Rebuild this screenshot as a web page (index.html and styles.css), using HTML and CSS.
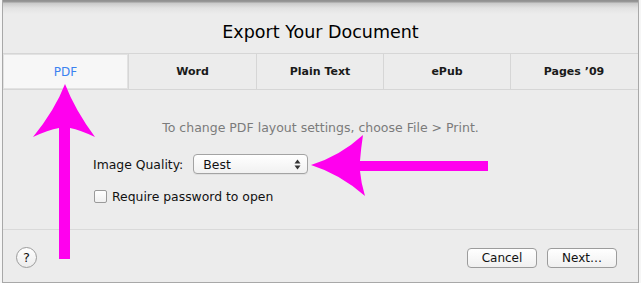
FILE: index.html
```html
<!DOCTYPE html>
<html lang="en">
<head>
    <meta charset="UTF-8">
    <title>Export Your Document</title>
    <link rel="stylesheet" href="styles.css">
</head>
<body>
    <div class="sheet">
        <!-- Title -->
        <div class="title">Export Your Document</div>

        <!-- Format tabs -->
        <div class="tabs">
            <div class="tab selected">PDF</div>
            <div class="tab">Word</div>
            <div class="tab">Plain Text</div>
            <div class="tab">ePub</div>
            <div class="tab">Pages ’09</div>
        </div>

        <!-- Options -->
        <div class="options">
            <p class="note">To change PDF layout settings, choose File &gt; Print.</p>
            <div class="row quality-row">
                <span class="label">Image Quality:</span>
                <div class="popup">
                    <span>Best</span>
                    <svg class="updown" width="7" height="11" viewBox="0 0 7 11">
                        <path d="M0.5 4.5 L3.5 0.5 L6.5 4.5 Z M0.5 6.5 L3.5 10.5 L6.5 6.5 Z" fill="#333"/>
                    </svg>
                </div>
            </div>
            <label class="row check-row">
                <span class="checkbox"></span>
                <span>Require password to open</span>
            </label>
        </div>

        <!-- Footer -->
        <div class="footer">
            <div class="help">?</div>
            <div class="buttons">
                <button class="btn">Cancel</button>
                <button class="btn">Next…</button>
            </div>
        </div>

        <!-- Annotation arrows drawn over the dialog -->
        <svg class="arrows" width="641" height="283" viewBox="0 0 641 283">
            <path d="M59 259 L59 128 Q48 130 33 137 Q55 110 65 84 Q75 110 95 137 Q80 130 70 128 L70 259 Z" fill="#ff00ee"/>
            <path d="M488 161 L360 161 Q361 148 363 135 Q340 156 311 165 Q340 174 365 196 Q361 183 360 171 L488 171 Z" fill="#ff00ee"/>
        </svg>
    </div>
</body>
</html>
```

FILE: styles.css
```css
body {
    margin: 0;
    background: #f6f6f6;
    font-family: 'DejaVu Sans', 'Liberation Sans', sans-serif;
    font-size: 12px;
    color: #111;
}

.sheet {
    position: relative;
    box-sizing: border-box;
    width: 637px;
    height: 283px;
    margin-left: 2px;
    border-left: 1px solid #a8a8a8;
    border-right: 1px solid #a8a8a8;
    border-bottom: 1px solid #a8a8a8;
    background: linear-gradient(#8e8e8e 0, #9a9a9a 2px, #c9c9c9 3px, #e2e2e2 8px, #ececec 14px);
    display: flex;
    flex-direction: column;
}

.title {
    height: 53px;
    box-sizing: border-box;
    padding-top: 22px;
    text-align: center;
    font-size: 17.5px;
    color: #000;
}

.tabs {
    display: grid;
    grid-template-columns: 125px 128px 127px 127px 127px;
    height: 37px;
    box-sizing: border-box;
    border-top: 1px solid #d6d6d6;
    border-bottom: 1px solid #d6d6d6;
}

.tab {
    display: flex;
    align-items: center;
    justify-content: center;
    border-left: 1px solid #d6d6d6;
    font-weight: bold;
    font-size: 11px;
    color: #1a1a1a;
}

.tab:first-child {
    border-left: none;
}

.tab.selected {
    background: #f7f7f7;
    color: #3b82f0;
    font-weight: normal;
    font-size: 12px;
    box-shadow: inset 0 0 0 1px #e2e2e2;
}

.options {
    flex: 1;
    padding-left: 90px;
    border-bottom: 1px solid #d9d9d9;
    font-size: 12.4px;
}

.note {
    margin: 30px 0 0;
    padding-right: 90px;
    text-align: center;
    color: #7b7b7b;
    font-size: 12.5px;
}

.row {
    display: flex;
    align-items: center;
}

.quality-row {
    margin-top: 19px;
}

.label {
    margin-right: 10px;
}

.popup {
    box-sizing: border-box;
    width: 115px;
    height: 20px;
    display: flex;
    align-items: center;
    justify-content: space-between;
    padding: 0 6px 0 9px;
    border: 1px solid #a3a3a3;
    border-radius: 4px;
    background: linear-gradient(#ffffff, #f1f1f1);
    box-shadow: 0 1px 0 rgba(0, 0, 0, 0.05);
}

.check-row {
    margin-top: 15px;
}

.checkbox {
    box-sizing: border-box;
    width: 13px;
    height: 13px;
    margin: 0 5px 0 1px;
    border: 1px solid #9a9a9a;
    border-radius: 2px;
    background: linear-gradient(#ffffff, #f0f0f0);
}

.footer {
    height: 52px;
    display: flex;
    align-items: center;
    justify-content: space-between;
    padding: 0 21px 0 13px;
    box-sizing: border-box;
}

.help {
    box-sizing: border-box;
    width: 21px;
    height: 21px;
    border: 1px solid #9c9c9c;
    border-radius: 50%;
    background: linear-gradient(#ffffff, #ececec);
    display: flex;
    align-items: center;
    justify-content: center;
    font-size: 13px;
    margin-top: 3px;
}

.buttons {
    display: flex;
    gap: 10px;
    margin-top: 3px;
}

.btn {
    box-sizing: border-box;
    width: 70px;
    height: 20px;
    padding: 0;
    font-family: inherit;
    font-size: 12px;
    color: #111;
    border: 1px solid #9c9c9c;
    border-radius: 4px;
    background: linear-gradient(#ffffff, #f0f0f0);
}

.arrows {
    position: absolute;
    top: 0;
    left: -3px;
    pointer-events: none;
}
```
